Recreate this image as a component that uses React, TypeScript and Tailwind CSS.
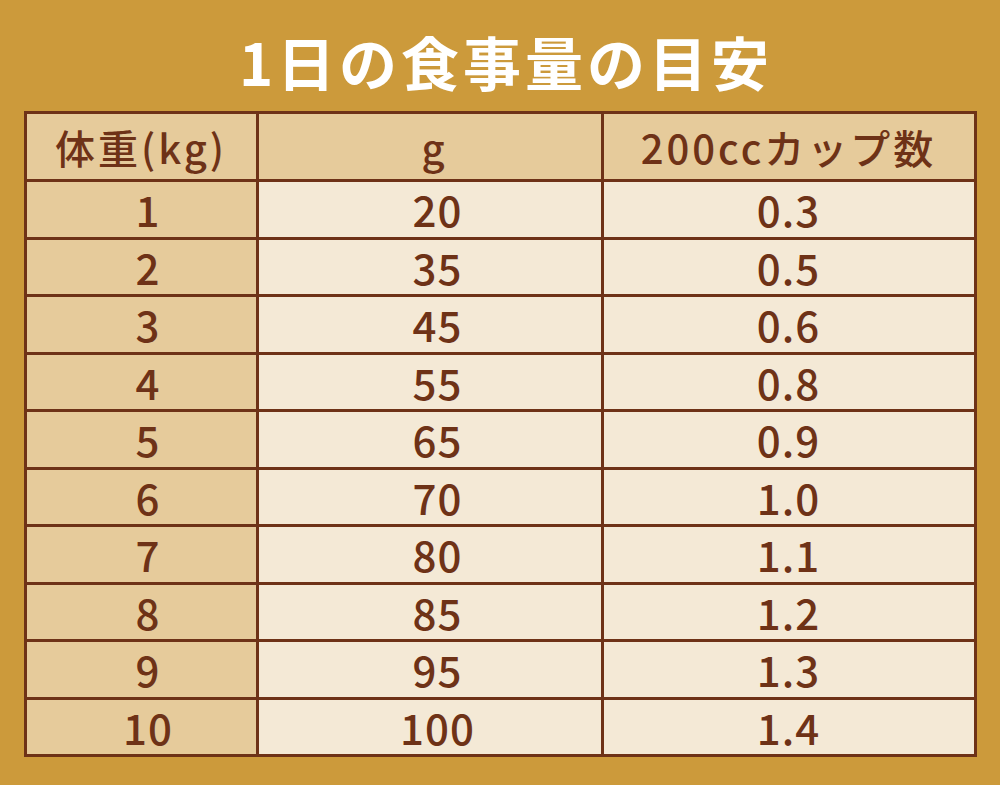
const rows: [string, string, string][] = [
  ["1", "20", "0.3"],
  ["2", "35", "0.5"],
  ["3", "45", "0.6"],
  ["4", "55", "0.8"],
  ["5", "65", "0.9"],
  ["6", "70", "1.0"],
  ["7", "80", "1.1"],
  ["8", "85", "1.2"],
  ["9", "95", "1.3"],
  ["10", "100", "1.4"],
];

export default function App() {
  return (
    <div
      className="w-[1000px] h-[785px] bg-[#cc9a3b] flex flex-col items-center"
      style={{ fontFamily: '"Noto Sans CJK JP", "Noto Sans", sans-serif' }}
    >
      <h1 className="h-[111px] flex items-center justify-center pt-[10px] pl-[12px] text-white text-[58px] font-bold tracking-[4px] leading-none">
        1日の食事量の目安
      </h1>
      <table className="border-collapse border-[3px] border-[#6e3217] text-[#6e3217] table-fixed w-[953px]">
        <colgroup>
          <col className="w-[232px]" />
          <col className="w-[345px]" />
          <col />
        </colgroup>
        <thead>
          <tr className="h-[68px] bg-[#e6cb9b] text-[40px] tracking-[3px]">
            <th className="border-[3px] border-[#6e3217] font-medium leading-none">体重(kg)</th>
            <th className="border-[3px] border-[#6e3217] font-medium leading-none pl-[10px]">g</th>
            <th className="border-[3px] border-[#6e3217] font-medium leading-none">200ccカップ数</th>
          </tr>
        </thead>
        <tbody>
          {rows.map((r) => (
            <tr key={r[0]} className="h-[57.5px] text-[42px] font-medium tracking-[1px]">
              <td className="border-[3px] border-[#6e3217] bg-[#e6cb9b] text-center leading-none pl-[14px]">{r[0]}</td>
              <td className="border-[3px] border-[#6e3217] bg-[#f4e9d6] text-center leading-none pl-[16px]">{r[1]}</td>
              <td className="border-[3px] border-[#6e3217] bg-[#f4e9d6] text-center leading-none">{r[2]}</td>
            </tr>
          ))}
        </tbody>
      </table>
    </div>
  );
}
